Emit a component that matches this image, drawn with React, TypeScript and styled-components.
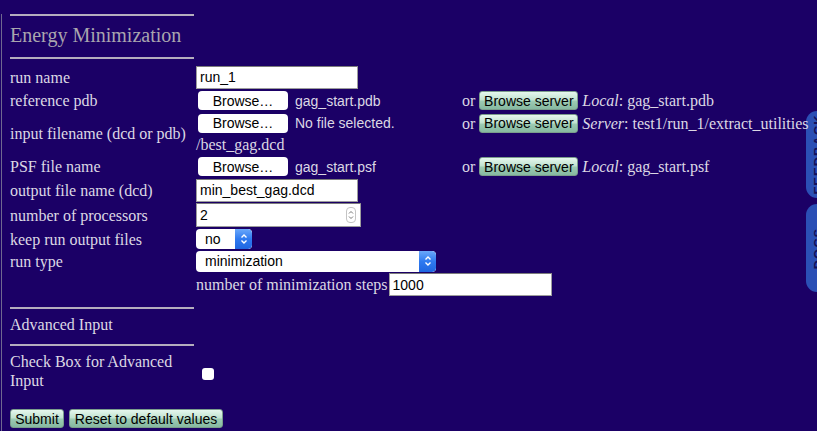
import React from "react";
import styled, { createGlobalStyle } from "styled-components";

const Global = createGlobalStyle`
  html, body { margin: 0; padding: 0; height: 100%; overflow: hidden; }
  body {
    background: #1b0066;
    color: #dcd8e4;
    font-family: "Liberation Serif", "Times New Roman", serif;
    font-size: 16px;
  }
`;

const SANS = `"Liberation Sans", Arial, Helvetica, sans-serif`;

const Frame = styled.div`
  min-height: 100vh;
  margin-left: 1px;
  border-left: 1px solid #6f6890;
  padding-left: 8px;
  box-sizing: border-box;
  position: relative;
`;

const Rule = styled.div<{ $top: number }>`
  width: 184px;
  height: 2px;
  background: #b4adbd;
  margin-top: ${(p) => p.$top}px;
`;

const Heading = styled.h2`
  margin: 0;
  padding: 7px 0 10px;
  font-size: 20px;
  line-height: 24px;
  font-weight: normal;
  color: #a9a5ae;
`;

const Form = styled.div`
  margin-top: 6px;
`;

const Row = styled.div<{ $h: number }>`
  display: grid;
  grid-template-columns: 186px 1fr;
  align-items: center;
  height: ${(p) => p.$h}px;
`;

const Label = styled.div`
  line-height: 19px;
  white-space: nowrap;
`;

const Value = styled.div`
  display: flex;
  align-items: center;
  white-space: nowrap;
`;

const TwoLine = styled.div`
  line-height: 21px;
  white-space: nowrap;
  position: relative;
  z-index: 3;
`;

const Line = styled.div`
  display: flex;
  align-items: center;
  height: 21px;
`;

const TextInput = styled.div<{ $w: number; $h: number }>`
  width: ${(p) => p.$w}px;
  height: ${(p) => p.$h}px;
  box-sizing: border-box;
  background: #fff;
  border: 1px solid #9d9d9d;
  border-top-color: #7c7c7c;
  font-family: ${SANS};
  font-size: 14px;
  color: #000;
  display: flex;
  align-items: center;
  padding-left: 3px;
  position: relative;
`;

const Spinner = styled.div`
  position: absolute;
  right: 4px;
  top: 50%;
  transform: translateY(-50%);
  width: 8px;
  height: 14px;
  border: 1px solid #c4c4c4;
  border-radius: 4px;
  display: flex;
  align-items: center;
  justify-content: center;
`;

const FileWidget = styled.div`
  width: 266px;
  display: flex;
  align-items: center;
  gap: 7px;
`;

const BrowseBtn = styled.div`
  margin-left: 2px;
  width: 90px;
  height: 19px;
  box-sizing: border-box;
  background: #fff;
  border-radius: 4px;
  color: #000;
  font-family: ${SANS};
  font-size: 14px;
  display: flex;
  align-items: center;
  justify-content: center;
`;

const FileName = styled.span`
  font-family: ${SANS};
  font-size: 14px;
  color: #dcd8e4;
`;

const Or = styled.span`
  margin-right: 4px;
`;

const GreenBtn = styled.div<{ $w: number }>`
  width: ${(p) => p.$w}px;
  height: 19px;
  box-sizing: border-box;
  border-radius: 3px;
  border: 1px solid #7a9d8c;
  background: linear-gradient(#e6f7ee 0%, #c2e3d1 45%, #9ccab3 55%, #86b9a0 100%);
  color: #000;
  font-family: ${SANS};
  font-size: 14px;
  display: flex;
  align-items: center;
  justify-content: center;
`;

const Source = styled.span`
  margin-left: 4px;
  em { font-style: italic; }
`;

const SelectBox = styled.div<{ $w: number; $h: number }>`
  width: ${(p) => p.$w}px;
  height: ${(p) => p.$h}px;
  background: #fff;
  border-radius: 4px;
  display: flex;
  align-items: center;
  overflow: hidden;
  font-family: ${SANS};
  font-size: 14px;
  color: #000;
`;

const SelectText = styled.span`
  flex: 1;
  padding-left: 9px;
`;

const SelectArrow = styled.div`
  width: 17px;
  height: 100%;
  background: linear-gradient(#6aa8fa, #2f7af0 50%, #1f66e0);
  display: flex;
  align-items: center;
  justify-content: center;
  border-radius: 0 4px 4px 0;
`;

const InlineLabel = styled.span`
  margin-right: 1px;
`;

const CheckRow = styled.div`
  display: grid;
  grid-template-columns: 186px 1fr;
  align-items: center;
  margin-top: 6px;
`;

const CheckLabel = styled.div`
  line-height: 19px;
`;

const CheckBox = styled.div`
  width: 12px;
  height: 12px;
  margin: 6px 0 0 6px;
  background: #fff;
  border-radius: 3px;
`;

const SectionTitle = styled.div`
  padding: 6px 0 10px;
  line-height: 19px;
`;

const Actions = styled.div`
  display: flex;
  gap: 5px;
  margin-top: 19px;
`;

const Tab = styled.div<{ $top: number; $h: number }>`
  position: absolute;
  right: -20px;
  top: ${(p) => p.$top}px;
  width: 31px;
  height: ${(p) => p.$h}px;
  background: #2b4fb5;
  border-radius: 11px;
  display: flex;
  align-items: center;
  justify-content: center;
  z-index: 2;
`;

const TabText = styled.span`
  transform: rotate(-90deg);
  font-family: ${SANS};
  font-size: 13px;
  font-weight: bold;
  letter-spacing: 1px;
  color: #14105a;
  white-space: nowrap;
  position: relative;
  left: -3px;
`;

const Chevrons = () => (
  <svg width="8" height="12" viewBox="0 0 8 12">
    <path d="M1.5 4.5 L4 2 L6.5 4.5 M1.5 7.5 L4 10 L6.5 7.5" fill="none" stroke="#fff" strokeWidth="1.4" />
  </svg>
);

const SmallSpin = () => (
  <svg width="6" height="12" viewBox="0 0 6 12">
    <path d="M1 4.5 L3 2.5 L5 4.5 M1 7.5 L3 9.5 L5 7.5" fill="none" stroke="#777" strokeWidth="1" />
  </svg>
);

const File = ({ name }: { name: string }) => (
  <FileWidget>
    <BrowseBtn>Browse…</BrowseBtn>
    <FileName>{name}</FileName>
  </FileWidget>
);

const Server = ({ kind, path }: { kind: string; path: string }) => (
  <>
    <Or>or</Or>
    <GreenBtn $w={99}>Browse server</GreenBtn>
    <Source>
      <em>{kind}</em>: {path}
    </Source>
  </>
);

export default function App() {
  return (
    <>
      <Global />
      <Frame>
        <Rule $top={14} />
        <Heading>Energy Minimization</Heading>
        <Rule $top={0} />
        <Form>
          <Row $h={24}>
            <Label>run name</Label>
            <Value>
              <TextInput $w={162} $h={23}>run_1</TextInput>
            </Value>
          </Row>
          <Row $h={23}>
            <Label>reference pdb</Label>
            <Value>
              <File name="gag_start.pdb" />
              <Server kind="Local" path="gag_start.pdb" />
            </Value>
          </Row>
          <Row $h={43}>
            <Label>input filename (dcd or pdb)</Label>
            <TwoLine>
              <Line>
                <File name="No file selected." />
                <Server kind="Server" path="test1/run_1/extract_utilities" />
              </Line>
              <div>/best_gag.dcd</div>
            </TwoLine>
          </Row>
          <Row $h={23}>
            <Label>PSF file name</Label>
            <Value>
              <File name="gag_start.psf" />
              <Server kind="Local" path="gag_start.psf" />
            </Value>
          </Row>
          <Row $h={24}>
            <Label>output file name (dcd)</Label>
            <Value>
              <TextInput $w={162} $h={23}>min_best_gag.dcd</TextInput>
            </Value>
          </Row>
          <Row $h={26}>
            <Label>number of processors</Label>
            <Value>
              <TextInput $w={165} $h={24}>
                2
                <Spinner>
                  <SmallSpin />
                </Spinner>
              </TextInput>
            </Value>
          </Row>
          <Row $h={22}>
            <Label>keep run output files</Label>
            <Value>
              <SelectBox $w={56} $h={20}>
                <SelectText>no</SelectText>
                <SelectArrow>
                  <Chevrons />
                </SelectArrow>
              </SelectBox>
            </Value>
          </Row>
          <Row $h={22}>
            <Label>run type</Label>
            <Value>
              <SelectBox $w={240} $h={21}>
                <SelectText>minimization</SelectText>
                <SelectArrow>
                  <Chevrons />
                </SelectArrow>
              </SelectBox>
            </Value>
          </Row>
          <Row $h={25}>
            <Label />
            <Value>
              <InlineLabel>number of minimization steps</InlineLabel>
              <TextInput $w={163} $h={23}>1000</TextInput>
            </Value>
          </Row>
        </Form>
        <Rule $top={10} />
        <SectionTitle>Advanced Input</SectionTitle>
        <Rule $top={0} />
        <CheckRow>
          <CheckLabel>Check Box for Advanced Input</CheckLabel>
          <CheckBox />
        </CheckRow>
        <Actions>
          <GreenBtn $w={54}>Submit</GreenBtn>
          <GreenBtn $w={154}>Reset to default values</GreenBtn>
        </Actions>
        <Tab $top={97} $h={87}>
          <TabText>FEEDBACK</TabText>
        </Tab>
        <Tab $top={190} $h={88}>
          <TabText>DOCS</TabText>
        </Tab>
      </Frame>
    </>
  );
}
